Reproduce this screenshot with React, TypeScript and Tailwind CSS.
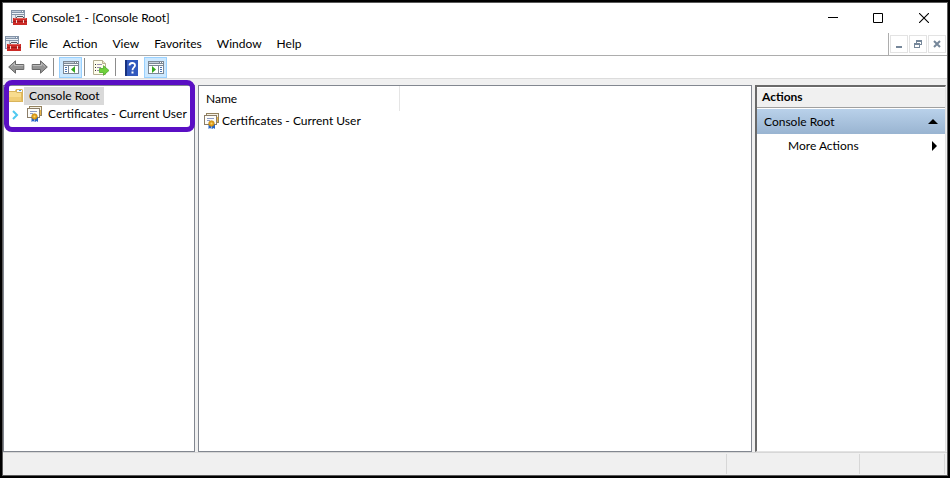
import React from "react";

function ConsoleIcon() {
  return (
    <svg width="16" height="16" viewBox="0 0 16 16" shapeRendering="crispEdges" aria-hidden="true" className="shrink-0">
      <rect x="0" y="0" width="14" height="13" fill="#8494a8" />
      <rect x="1" y="1" width="9" height="1" fill="#c3cedc" />
      <rect x="11" y="1" width="1" height="1" fill="#fff" />
      <rect x="1" y="3" width="12" height="1" fill="#eef2f6" />
      <rect x="1" y="5" width="12" height="7" fill="#e4e9ef" />
      <rect x="4" y="5" width="1" height="7" fill="#a5b1bf" />
      <path d="M6 6h6v1h1v2h-1V7H6v2H5V7h1z" fill="#53585f" />
      <rect x="2" y="8" width="14" height="7" fill="#cb2a26" />
      <rect x="3" y="8" width="12" height="1" fill="#e4625a" />
      <rect x="2" y="11" width="14" height="1" fill="#a01a18" />
      <rect x="5" y="10" width="1" height="3" fill="#f2d3d0" />
      <rect x="12" y="10" width="1" height="3" fill="#f2d3d0" />
    </svg>
  );
}

function CertIcon() {
  return (
    <svg width="16" height="16" viewBox="0 0 16 16" aria-hidden="true" className="shrink-0">
      <rect x="2.5" y="0.5" width="12" height="9" fill="#f5f0e2" stroke="#93825f" />
      <rect x="0.5" y="2.5" width="12" height="9" fill="#fdfdfa" stroke="#8b7d68" />
      <path d="M3 5.5h7M3 7.5h3" stroke="#8d9bc6" />
      <path d="M4.500 11v5l1.500-1 1.500 1v-5zM8 11v5l1.500-1 1.500 1v-5z" fill="#2565c7" />
      <circle cx="7.500" cy="10.500" r="2.800" fill="#e0a01c" stroke="#b67a0c" strokeWidth="0.600" />
      <circle cx="7.500" cy="10.500" r="1" fill="#f9d673" />
      <path d="M13.500 4v5" stroke="#e8b64a" />
    </svg>
  );
}

function FolderIcon() {
  return (
    <svg width="14" height="14" viewBox="0 0 14 14" aria-hidden="true" className="shrink-0">
      <path d="M0 2h6l1-2h6l1 1v12H0z" fill="#d9b45b" />
      <path d="M8 1h5v2H8z" fill="#f8fbff" />
      <path d="M10 1h2v1h-2z" fill="#4a9ad8" />
      <path d="M0 3h7l1 1h5v8H0z" fill="#f8dc8e" />
      <path d="M0 8h13v4H0z" fill="#f0cd75" />
      <path d="M12 4h1v9h-1z" fill="#e2bb60" />
    </svg>
  );
}

function ArrowIcon({ back = false }: { back?: boolean }) {
  return (
    <svg width="17" height="14" viewBox="0 0 17 14" aria-hidden="true">
      <path
        d={back ? "M.7 7 7.500.8v3.700h8.300v5H7.500v3.700z" : "M16.300 7 9.500.8v3.700H1.200v5h8.300v3.700z"}
        fill="#949494"
        stroke="#686868"
      />
      <path d={back ? "M3 6.500 6.500 3.200v2.300h8.800" : "M1.700 5.500h8.800V3.200L14 6.500"} fill="none" stroke="#bdbdbd" />
    </svg>
  );
}

function PaneIcon({ right = false }: { right?: boolean }) {
  return (
    <svg width="16" height="14" viewBox="0 0 16 14" shapeRendering="crispEdges" aria-hidden="true" className="mt-px">
      <rect width="16" height="13" fill="#7b8794" />
      <rect x="1" y="1" width="10" height="1" fill="#c4ced8" />
      <rect x="12" y="1" width="1" height="1" fill="#fff" />
      <rect x="14" y="1" width="1" height="1" fill="#fff" />
      <rect x="1" y="3" width="14" height="1" fill="#f5f7f9" />
      <rect x="1" y="5" width={right ? 9 : 4} height="7" fill="#fff" />
      <rect x={right ? 11 : 6} y="5" width={right ? 4 : 9} height="7" fill="#fff" />
      <path d={right ? "M12 6h2v1h-2zM12 8h2v1h-2zM12 10h2v1h-2z" : "M2 6h2v1H2zM2 8h2v1H2zM2 10h2v1H2z"} fill="#4976b4" />
      <path d={right ? "M4 5v7l4-3.500z" : "M12 5v7L8 8.500z"} fill="#35a81f" shapeRendering="auto" />
    </svg>
  );
}

function ExportIcon() {
  return (
    <svg width="17" height="16" viewBox="0 0 17 16" aria-hidden="true" className="mt-px">
      <path d="M.5.500h9l3 3v11H.5z" fill="#fffdec" stroke="#b5ae92" />
      <path d="M9.500.5v3h3" fill="#eee7c8" stroke="#b5ae92" />
      <path d="M2 4.500h1M2 7.500h1M2 10.500h1" stroke="#333" />
      <path d="M4 4.500h5M4 7.500h4M4 10.500h2" stroke="#9a8fae" />
      <path d="M6.500 8.500h4V5.700l5.500 4.800-5.500 4.800v-2.800h-4z" fill="#6fd03c" stroke="#4bab28" strokeWidth="0.8" />
    </svg>
  );
}

function HelpIcon() {
  return (
    <svg width="13" height="16" viewBox="0 0 13 16" aria-hidden="true" className="mt-px">
      <rect width="13" height="16" fill="#3158bd" />
      <rect width="2" height="16" fill="#16317f" />
      <path d="M4.500 5.500C4.500 2.200 10 2.200 10 5.300 10 7.500 7.500 7.500 7.500 10.300" fill="none" stroke="#fff" strokeWidth="1.800" />
      <rect x="6.500" y="11.500" width="2" height="2" fill="#fff" />
    </svg>
  );
}

const menus = ["File", "Action", "View", "Favorites", "Window", "Help"];

function Separator() {
  return <span className="h-[18px] w-px shrink-0 bg-[#8c8c8c]" />;
}

const toggled = "flex h-[21px] w-[23px] items-center justify-center border border-[#99d1ff] bg-[#cce8ff]";
const mdi = "flex h-[18px] w-[18px] items-center justify-center border border-[#e3e3e3] bg-white";

export default function App() {
  return (
    <div className="h-screen bg-black p-[2px] font-['Lato','Open_Sans',sans-serif] text-[12px] leading-[18px] text-black">
      <div className="flex h-full flex-col border border-[#5a5a5a] bg-[#f0f0f0]">
        <header className="flex h-[30px] shrink-0 items-center bg-white pl-2">
          <ConsoleIcon />
          <h1 className="ml-[5px] grow">Console1 - [Console Root]</h1>
          <button aria-label="Minimize" className="flex h-full w-[46px] items-center justify-center">
            <svg width="11" height="10" aria-hidden="true"><path d="M0 4.500h10" stroke="#000" /></svg>
          </button>
          <button aria-label="Maximize" className="flex h-full w-[45px] items-center justify-center">
            <svg width="11" height="10" aria-hidden="true"><path d="M.5.500h9v9h-9z" fill="none" stroke="#000" /></svg>
          </button>
          <button aria-label="Close" className="flex h-full w-[46px] items-center justify-center">
            <svg width="10" height="10" aria-hidden="true"><path d="M0 0l10 10M10 0L0 10" stroke="#000" strokeWidth="1.100" /></svg>
          </button>
        </header>

        <div className="flex h-[23px] shrink-0 border-b border-[#adadad] bg-white pl-[2px]">
          <div className="flex items-center"><ConsoleIcon /></div>
          <nav aria-label="Menu" className="flex grow items-center gap-[15px] pl-2">
            {menus.map((m) => <button key={m}>{m}</button>)}
          </nav>
          <div className="flex items-center gap-px border-l border-[#adadad] pr-px pl-px">
            <button aria-label="Minimize document" className={mdi}>
              <svg width="8" height="8" aria-hidden="true"><path d="M1 6h6v2H1z" fill="#76879a" /></svg>
            </button>
            <button aria-label="Restore document" className={mdi}>
              <svg width="8" height="8" viewBox="0 0 8 8" aria-hidden="true">
                <path d="M2 0h6v5H6V4h1V2H3v1H2zM0 3h6v5H0zm1 2v2h4V5z" fill="#76879a" fillRule="evenodd" />
              </svg>
            </button>
            <button aria-label="Close document" className={mdi}>
              <svg width="8" height="8" aria-hidden="true"><path d="M1 1l6 6M7 1L1 7" stroke="#76879a" strokeWidth="2" /></svg>
            </button>
          </div>
        </div>

        <div role="toolbar" aria-label="Standard" className="flex h-[23px] shrink-0 items-center border-b border-[#dcdcdc] bg-white pl-[5px]">
          <button aria-label="Back"><ArrowIcon back /></button>
          <button aria-label="Forward" className="mr-[5px] ml-[6px]"><ArrowIcon /></button>
          <Separator />
          <button aria-label="Show or hide console tree" className={`mr-[2px] ml-[5px] ${toggled}`}><PaneIcon /></button>
          <Separator />
          <button aria-label="Export list" className="mr-[5px] ml-2"><ExportIcon /></button>
          <Separator />
          <button aria-label="Help" className="mr-[6px] ml-[9px]"><HelpIcon /></button>
          <button aria-label="Show or hide action pane" className={toggled}><PaneIcon right /></button>
        </div>

        <main className="flex min-h-0 grow pt-[6px]">
          <section aria-label="Console tree" className="relative w-[192px] shrink-0 border border-[#828790] bg-white">
            <ul className="pt-px">
              <li className="flex h-[18px] items-center pl-[5px]">
                <FolderIcon />
                <button className="ml-px bg-[#d9d9d9] pr-1 pl-[5px]">Console Root</button>
              </li>
              <li className="flex h-[18px] items-center pl-2">
                <button aria-label="Expand">
                  <svg width="7" height="10" className="mt-[2px]" aria-hidden="true">
                    <path d="M1 1l4 4-4 4" fill="none" stroke="#4fc9f0" strokeWidth="2" />
                  </svg>
                </button>
                <span className="ml-2"><CertIcon /></span>
                <button className="ml-[5px] whitespace-nowrap">Certificates - Current User</button>
              </li>
            </ul>
            <div className="pointer-events-none absolute -top-[6px] -right-px left-0 h-[52px] rounded-lg border-[5px] border-[#5a0fc4]" />
          </section>

          <section aria-label="Contents" className="ml-[3px] min-w-0 grow border border-[#828790] bg-white">
            <table className="w-full table-fixed border-collapse text-left">
              <thead>
                <tr className="h-[25px]">
                  <th className="w-[200px] border-r border-[#e5e5e5] p-0 pl-[7px] font-normal">Name</th>
                  <th aria-label="Empty column" />
                </tr>
              </thead>
              <tbody>
                <tr className="h-5">
                  <td className="p-0 pl-[5px]">
                    <div className="flex items-center gap-[2px] whitespace-nowrap"><CertIcon />Certificates - Current User</div>
                  </td>
                  <td />
                </tr>
              </tbody>
            </table>
          </section>

          <aside aria-label="Actions" className="mr-px ml-[3px] w-[191px] shrink-0 border-t-2 border-r border-b border-l-2 border-t-[#696969] border-r-[#e3e3e3] border-b-[#e3e3e3] border-l-[#696969] bg-white pt-px">
            <h2 className="h-5 border-b border-[#a0a0a0] bg-[#f0f0f0] pl-[5px] font-bold">Actions</h2>
            <button className="mt-px flex h-[25px] w-full items-center justify-between bg-linear-to-b from-[#b9d1ea] to-[#99b4d1] pr-[7px] pl-[7px]">
              Console Root
              <svg width="10" height="5" aria-hidden="true"><path d="M0 5l5-5 5 5z" /></svg>
            </button>
            <button className="flex h-6 w-full items-center justify-between pr-2 pl-[31px]">
              More Actions
              <svg width="5" height="10" aria-hidden="true"><path d="M0 0l5 5-5 5z" /></svg>
            </button>
          </aside>
        </main>

        <footer className="flex h-[23px] shrink-0 border-t border-[#d7d7d7] py-px pr-[2px]">
          <span className="grow border-r border-[#d7d7d7]" />
          <span className="w-[133px] border-r border-[#d7d7d7]" />
          <span className="w-[85px] border-r border-[#d7d7d7]" />
        </footer>
      </div>
    </div>
  );
}
